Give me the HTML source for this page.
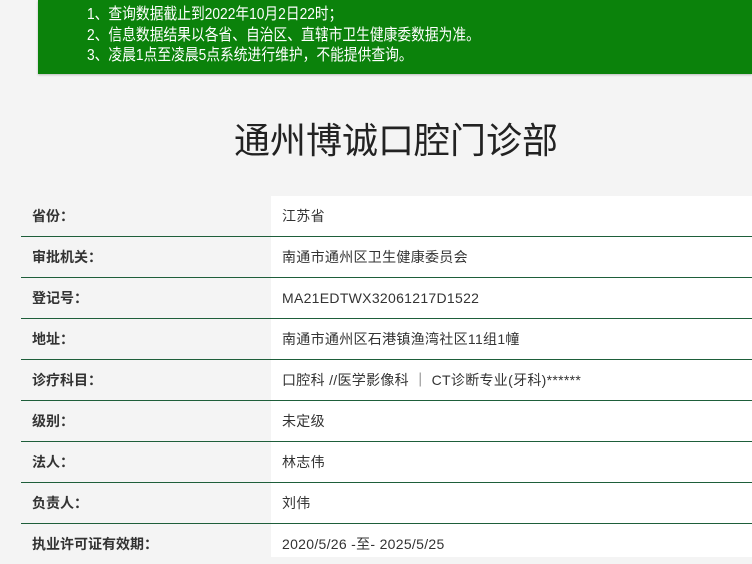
<!DOCTYPE html>
<html><head><meta charset="utf-8"><style>
body{margin:0;width:752px;height:557px;overflow:hidden;background:#f4f4f4;font-family:"Liberation Sans","Noto Sans CJK SC",sans-serif;position:relative}
.ban{position:absolute;left:38px;top:0;width:714px;height:74px;background:#0b820b;box-shadow:0 1px 2px #bbb}
.ban div{position:absolute;left:49px;color:#fff;font-size:16px;line-height:20px;transform:scaleX(0.86);transform-origin:0 0;white-space:nowrap}
h1{position:absolute;top:118px;left:0;width:792px;text-align:center;margin:0;font-size:36px;font-weight:normal;color:#222;line-height:46px}
.wb{position:absolute;left:271px;top:196px;width:481px;height:361px;background:#fff}
.row{position:absolute;left:21px;width:731px;height:40px;border-bottom:1px solid #1e5e3a;font-size:14px;color:#333}
.row b{position:absolute;left:11px;top:10px;line-height:20px}
.row span{position:absolute;left:261px;top:10px;line-height:20px;letter-spacing:0.3px}
</style></head><body>
<div class="ban">
<div style="top:5px">1、查询数据截止到2022年10月2日22时；</div>
<div style="top:26px">2、信息数据结果以各省、自治区、直辖市卫生健康委数据为准。</div>
<div style="top:46px">3、凌晨1点至凌晨5点系统进行维护，不能提供查询。</div>
</div>
<h1>通州博诚口腔门诊部</h1>
<div class="wb"></div>
<div class="row" style="top:196px"><b>省份：</b><span>江苏省</span></div>
<div class="row" style="top:237px"><b>审批机关：</b><span>南通市通州区卫生健康委员会</span></div>
<div class="row" style="top:278px"><b>登记号：</b><span>MA21EDTWX32061217D1522</span></div>
<div class="row" style="top:319px"><b>地址：</b><span>南通市通州区石港镇渔湾社区11组1幢</span></div>
<div class="row" style="top:360px"><b>诊疗科目：</b><span>口腔科 //医学影像科 ｜ CT诊断专业(牙科)******</span></div>
<div class="row" style="top:401px"><b>级别：</b><span>未定级</span></div>
<div class="row" style="top:442px"><b>法人：</b><span>林志伟</span></div>
<div class="row" style="top:483px"><b>负责人：</b><span>刘伟</span></div>
<div class="row" style="top:524px;border:none"><b>执业许可证有效期：</b><span>2020/5/26 -至- 2025/5/25</span></div>
</body></html>
